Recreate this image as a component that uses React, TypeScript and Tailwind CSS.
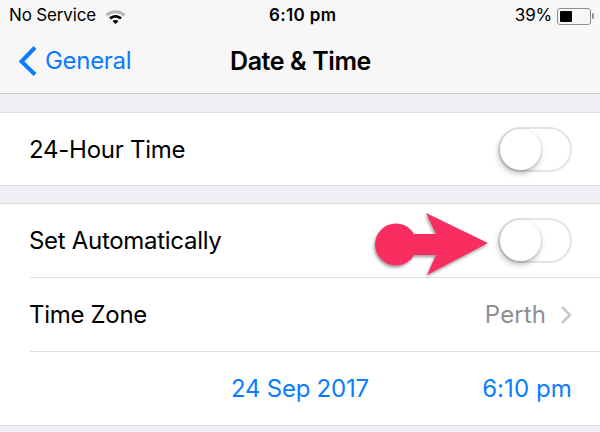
const font = "font-['Inter','Liberation_Sans',sans-serif]";

const Toggle = () => (
  <div className="w-[74px] h-[45px] rounded-full border-[2px] border-[#e4e4e6] bg-white relative">
    <div className="absolute left-[0px] top-[0px] w-[41px] h-[41px] rounded-full bg-white shadow-[-1px_3px_6px_rgba(0,0,0,0.3),1px_1px_2px_rgba(0,0,0,0.06)]" />
  </div>
);

const Arrow = () => (
  <svg className="absolute left-[370px] top-[208px]" width="125" height="72" viewBox="370 208 125 72">
    <defs>
      <filter id="arrowShadow" x="-10%" y="-10%" width="120%" height="125%">
        <feDropShadow dx="-1" dy="2" stdDeviation="1.5" floodColor="#000" floodOpacity="0.4" />
      </filter>
    </defs>
    <g fill="#f72e5e" filter="url(#arrowShadow)">
      <circle cx="396" cy="244.5" r="21" />
      <path d="M410 234H436L426 213L488 243L427 275L436 255H410Z" />
    </g>
  </svg>
);

export default function App() {
  return (
    <div className={`${font} relative w-[600px] h-[432px] overflow-hidden bg-[#efeff4] text-black`}>
      <header className="h-[94px] bg-[#f7f7f8] border-b border-[#c9c9cc]">
        <div className="relative flex items-center justify-between h-[32px] pl-[9px] pr-[6px]">
          <div className="flex items-center gap-[9px]">
            <span className="text-[17px] tracking-[-0.15px]">No Service</span>
            <svg width="21" height="15" viewBox="0 0 21 15">
              <path d="M0.5 5.2C6 -0.2 15 -0.2 20.5 5.2L18.4 7.4C14 3.2 7 3.2 2.6 7.4Z" fill="#b4b4b4" />
              <path d="M4 8.6C7.8 5.2 13.2 5.2 17 8.6L15 10.6C12.3 8.2 8.7 8.2 6 10.6Z" fill="#000" />
              <path d="M7.5 12C9.2 10.6 11.8 10.6 13.5 12L10.5 15Z" fill="#000" />
            </svg>
          </div>
          <span className="absolute left-[269px] text-[17px] font-semibold tracking-[0.35px]">6:10 pm</span>
          <div className="flex items-center gap-[5px]">
            <span className="text-[17px] tracking-[-0.2px]">39%</span>
            <div className="flex items-center">
              <div className="w-[34px] h-[17px] rounded-[3px] border border-[#8e8e8e] p-[2px] bg-transparent">
                <div className="w-[12px] h-full bg-black rounded-[1px]" />
              </div>
              <div className="ml-[1px] w-[2px] h-[6px] rounded-r-full bg-[#8e8e8e]" />
            </div>
          </div>
        </div>
        <div className="relative flex items-center h-[61px] pb-[3px]">
          <svg className="ml-[18px]" width="20" height="32" viewBox="0 0 20 32">
            <path d="M17 2.5L3.5 16.5L17 29.5" fill="none" stroke="#0b7bff" strokeWidth="4" />
          </svg>
          <span className="ml-[7px] text-[24px] leading-none text-[#0b7bff] tracking-[-0.3px]">General</span>
          <span className="absolute left-[230px] text-[25px] leading-none font-semibold tracking-[-0.4px]">Date &amp; Time</span>
        </div>
      </header>

      <section className="mt-[18px] bg-white border-y border-[#dcdcde]">
        <div className="h-[72px] pt-[1px] flex items-center justify-between pl-[29px] pr-[28px] text-[24px] tracking-[-0.25px]">
          24-Hour Time
          <Toggle />
        </div>
      </section>

      <section className="mt-[17px] bg-white border-y border-[#dcdcde]">
        <div className="h-[73px] flex items-center justify-between pl-[29px] pr-[28px] text-[24px] tracking-[-0.3px]">
          Set Automatically
          <Toggle />
        </div>
        <div className="ml-[30px] h-[74px] flex items-center justify-between pr-[28px] border-t border-[#dcdcde] text-[24px] tracking-[-0.3px]">
          <span className="-ml-[1px]">Time Zone</span>
          <div className="flex items-center gap-[14px] text-[#8e8e93] tracking-[0.1px]">
            Perth
            <svg width="12" height="20" viewBox="0 0 12 20">
              <path d="M2 2L10 10L2 18" fill="none" stroke="#c7c7cc" strokeWidth="2.5" />
            </svg>
          </div>
        </div>
        <div className="ml-[30px] h-[74px] flex items-center justify-between pl-[201px] pr-[28px] border-t border-[#dcdcde] text-[24px] text-[#0b7bff] tracking-[-0.25px]">
          <span>24 Sep 2017</span>
          <span className="tracking-[0.1px]">6:10 pm</span>
        </div>
      </section>

      <Arrow />
    </div>
  );
}
